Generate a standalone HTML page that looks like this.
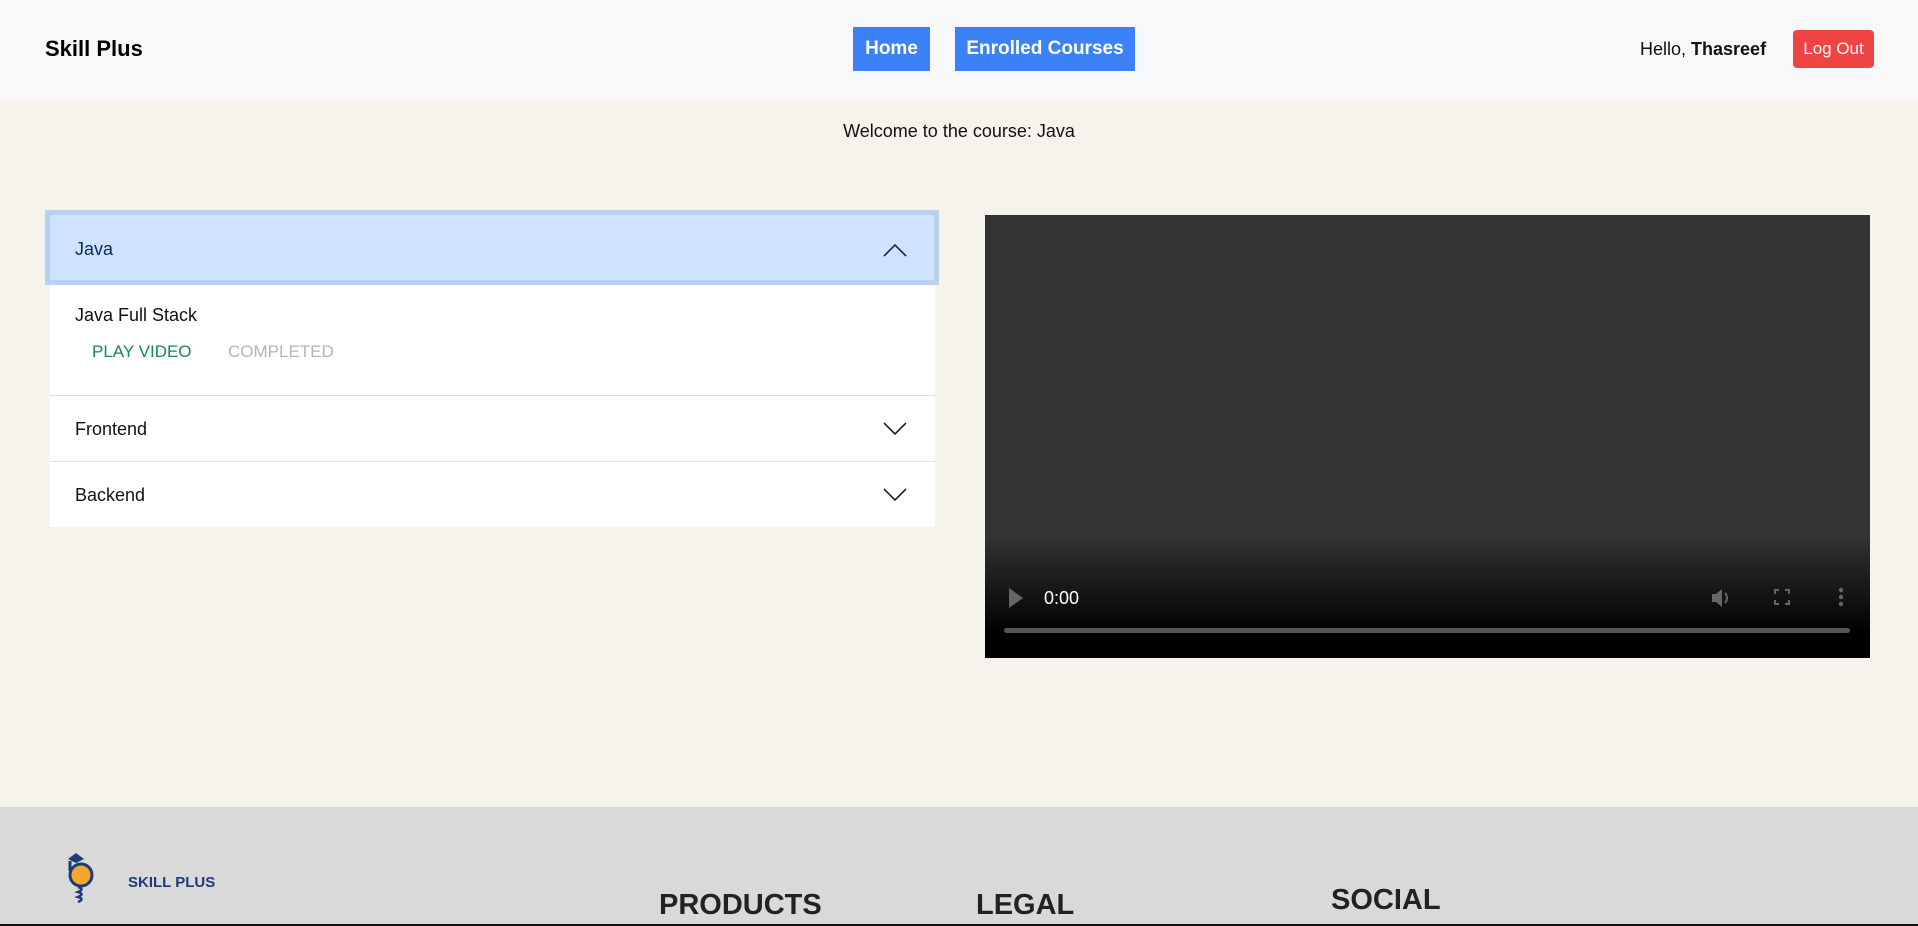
<!DOCTYPE html>
<html><head><meta charset="utf-8"><style>
*{box-sizing:border-box;margin:0;padding:0}
body{width:1918px;height:926px;overflow:hidden;background:#f6f3ec;font-family:"Liberation Sans",sans-serif;color:#111;position:relative}
.abs{position:absolute}
header{position:absolute;left:0;top:0;width:1918px;height:100px;background:#f7f8fa}
.btn{position:absolute;background:#3b82f6;color:#fff;font-weight:bold;font-size:19px;display:flex;align-items:center;justify-content:center;top:27px;height:44px}
.row{position:absolute;left:50px;width:885px;background:#fff;border-top:1px solid #e0e0e0;font-size:18px}
.chev{position:absolute;right:28px}
</style></head><body>
<header>
<div class="abs" style="left:45px;top:36px;font-size:22px;font-weight:bold;color:#000">Skill Plus</div>
<div class="btn" style="left:853px;width:77px">Home</div>
<div class="btn" style="left:955px;width:180px">Enrolled Courses</div>
<div class="abs" style="left:1640px;top:39px;font-size:18px">Hello, <b>Thasreef</b></div>
<div class="abs" style="left:1793px;top:30px;width:81px;height:38px;background:#ef4444;border-radius:4px;color:#fff;font-size:17px;display:flex;align-items:center;justify-content:center">Log Out</div>
</header>
<div class="abs" style="left:0;width:1918px;top:121px;text-align:center;font-size:18px">Welcome to the course: Java</div>

<div class="abs" style="left:45px;top:210px;width:894px;height:75px;background:#cfe2ff;border:5px solid #b6d1f2">
<div class="abs" style="left:25px;top:24px;font-size:18px;color:#0a2a5c">Java</div>
<svg class="abs" style="right:27px;top:28px" width="24" height="14" viewBox="0 0 24 14"><path d="M1 13L12 2L23 13" fill="none" stroke="#0a2a5c" stroke-width="1.6"/></svg>
</div>
<div class="abs" style="left:50px;top:285px;width:885px;height:110px;background:#fff">
<div class="abs" style="left:25px;top:20px;font-size:18px">Java Full Stack</div>
<div class="abs" style="left:42px;top:57px;font-size:17px;color:#198754">PLAY VIDEO</div>
<div class="abs" style="left:178px;top:57px;font-size:17px;color:#b5b5b5">COMPLETED</div>
</div>
<div class="row" style="top:395px;height:66px"><div class="abs" style="left:25px;top:23px">Frontend</div>
<svg class="chev" style="top:26px" width="24" height="14" viewBox="0 0 24 14"><path d="M1 1L12 12L23 1" fill="none" stroke="#222" stroke-width="1.6"/></svg></div>
<div class="row" style="top:461px;height:66px"><div class="abs" style="left:25px;top:23px">Backend</div>
<svg class="chev" style="top:26px" width="24" height="14" viewBox="0 0 24 14"><path d="M1 1L12 12L23 1" fill="none" stroke="#222" stroke-width="1.6"/></svg></div>

<div class="abs" style="left:985px;top:215px;width:885px;height:443px;background:linear-gradient(to bottom,#333 0,#333 320px,#000 420px,#000 100%)">
<svg class="abs" style="left:24px;top:373px" width="14" height="20"><path d="M0 0L14 10L0 20Z" fill="#666"/></svg>
<div class="abs" style="left:59px;top:373px;color:#fff;font-size:18px">0:00</div>
<svg class="abs" style="left:725px;top:372px" width="22" height="22" viewBox="0 0 22 22"><path d="M2 7h4l6-5v18l-6-5H2z" fill="#666"/><path d="M15 6q4 5 0 10" stroke="#666" stroke-width="2" fill="none"/></svg>
<svg class="abs" style="left:789px;top:374px" width="16" height="16" viewBox="0 0 16 16"><path d="M1 5V1h4M11 1h4v4M15 11v4h-4M5 15H1v-4" stroke="#666" stroke-width="2" fill="none"/></svg>
<svg class="abs" style="left:853px;top:372px" width="6" height="20"><circle cx="3" cy="3" r="2.2" fill="#666"/><circle cx="3" cy="10" r="2.2" fill="#666"/><circle cx="3" cy="17" r="2.2" fill="#666"/></svg>
<div class="abs" style="left:19px;top:413px;width:846px;height:5px;border-radius:3px;background:#555"></div>
</div>

<div class="abs" style="left:0;top:807px;width:1918px;height:119px;background:#d9d9d9;border-bottom:2px solid #111">
<svg class="abs" style="left:66px;top:44px" width="34" height="56" viewBox="0 0 34 56"><path d="M2 8L10 2L18 8L10 12Z" fill="#1e3a7a"/><path d="M4 10v10" stroke="#1e3a7a" stroke-width="3"/><circle cx="15" cy="24" r="11" fill="#f4a72a" stroke="#1e3a7a" stroke-width="3"/><path d="M12 36q7 2 0 5q7 2 0 5q7 2 0 5" stroke="#1e3a7a" stroke-width="2.5" fill="none"/></svg>
<div class="abs" style="left:128px;top:67px;font-size:15px;font-weight:bold;color:#1e3a7a">SKILL PLUS</div>
<div class="abs" style="left:659px;top:82px;font-size:29px;font-weight:bold;color:#222">PRODUCTS</div>
<div class="abs" style="left:976px;top:82px;font-size:29px;font-weight:bold;color:#222">LEGAL</div>
<div class="abs" style="left:1331px;top:77px;font-size:29px;font-weight:bold;color:#222">SOCIAL</div>
</div>
</body></html>
